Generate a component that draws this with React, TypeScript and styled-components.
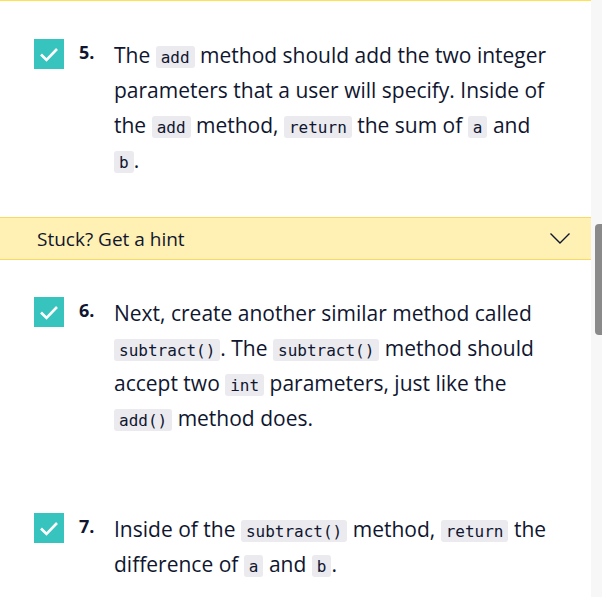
import React from "react";
import styled, { createGlobalStyle } from "styled-components";

const GlobalStyle = createGlobalStyle`
  html, body {
    margin: 0;
    padding: 0;
    background: #ffffff;
  }
  body {
    font-family: "Open Sans", "Liberation Sans", sans-serif;
    color: #10162f;
  }
`;

const Page = styled.div`
  display: flex;
  width: 602px;
  height: 597px;
  overflow: hidden;
`;

const Content = styled.div`
  width: 591px;
  border-top: 1px solid #ffe24d;
  box-sizing: border-box;
`;

const ScrollTrack = styled.div`
  width: 11px;
  background: #f7f7f7;
  display: flex;
  justify-content: flex-end;
`;

const ScrollThumb = styled.div`
  width: 7px;
  height: 111px;
  margin-top: 224px;
  background: #8a8a8a;
  border-radius: 4px 0 0 4px;
`;

const Step = styled.div<{ $top: number }>`
  display: flex;
  align-items: flex-start;
  padding-left: 34px;
  margin-top: ${(p) => p.$top}px;
`;

const Check = styled.div`
  width: 30px;
  height: 30px;
  flex: none;
  margin-top: 1px;
  background: #37c3be;
  display: flex;
  align-items: center;
  justify-content: center;
`;

const Num = styled.span`
  width: 35px;
  flex: none;
  margin-left: 15px;
  font-weight: 700;
  font-size: 18px;
  line-height: 35px;
  margin-top: -3px;
`;

const Text = styled.p`
  margin: 0;
  width: 442px;
  font-size: 21px;
  line-height: 35px;
`;

const Code = styled.code`
  font-family: "DejaVu Sans Mono", "Liberation Mono", monospace;
  font-size: 16px;
  line-height: 1;
  background: #eaeaef;
  border-radius: 3px;
  padding: 2px 5px 1px;
  color: #10162f;
`;

const Hint = styled.div`
  margin-top: 39px;
  height: 41px;
  background: #fff0b3;
  border-top: 1px solid #f9d963;
  border-bottom: 1px solid #f9d963;
  display: flex;
  align-items: center;
  justify-content: space-between;
  padding: 0 20px 0 37px;
  font-size: 19px;
`;

const Chevron = () => (
  <svg width="22" height="13" viewBox="0 0 22 13">
    <polyline
      points="1.5,1.5 11,11 20.5,1.5"
      fill="none"
      stroke="#10162f"
      strokeWidth="1.4"
    />
  </svg>
);

const Tick = () => (
  <svg width="20" height="16" viewBox="0 0 20 16">
    <polyline
      points="2,8.5 7.5,14 18,3"
      fill="none"
      stroke="#ffffff"
      strokeWidth="2.6"
    />
  </svg>
);

export default function App() {
  return (
    <Page>
      <GlobalStyle />
      <Content>
        <Step $top={37}>
          <Check>
            <Tick />
          </Check>
          <Num>5.</Num>
          <Text>
            The <Code>add</Code> method should add the two integer parameters
            that a user will specify. Inside of the <Code>add</Code> method,{" "}
            <Code>return</Code> the sum of <Code>a</Code> and <Code>b</Code>.
          </Text>
        </Step>
        <Hint>
          <span>Stuck? Get a hint</span>
          <Chevron />
        </Hint>
        <Step $top={36}>
          <Check>
            <Tick />
          </Check>
          <Num>6.</Num>
          <Text>
            Next, create another similar method called{" "}
            <Code>subtract()</Code>. The <Code>subtract()</Code> method should
            accept two <Code>int</Code> parameters, just like the{" "}
            <Code>add()</Code> method does.
          </Text>
        </Step>
        <Step $top={76}>
          <Check>
            <Tick />
          </Check>
          <Num>7.</Num>
          <Text>
            Inside of the <Code>subtract()</Code> method, <Code>return</Code>{" "}
            the difference of <Code>a</Code> and <Code>b</Code>.
          </Text>
        </Step>
      </Content>
      <ScrollTrack>
        <ScrollThumb />
      </ScrollTrack>
    </Page>
  );
}
